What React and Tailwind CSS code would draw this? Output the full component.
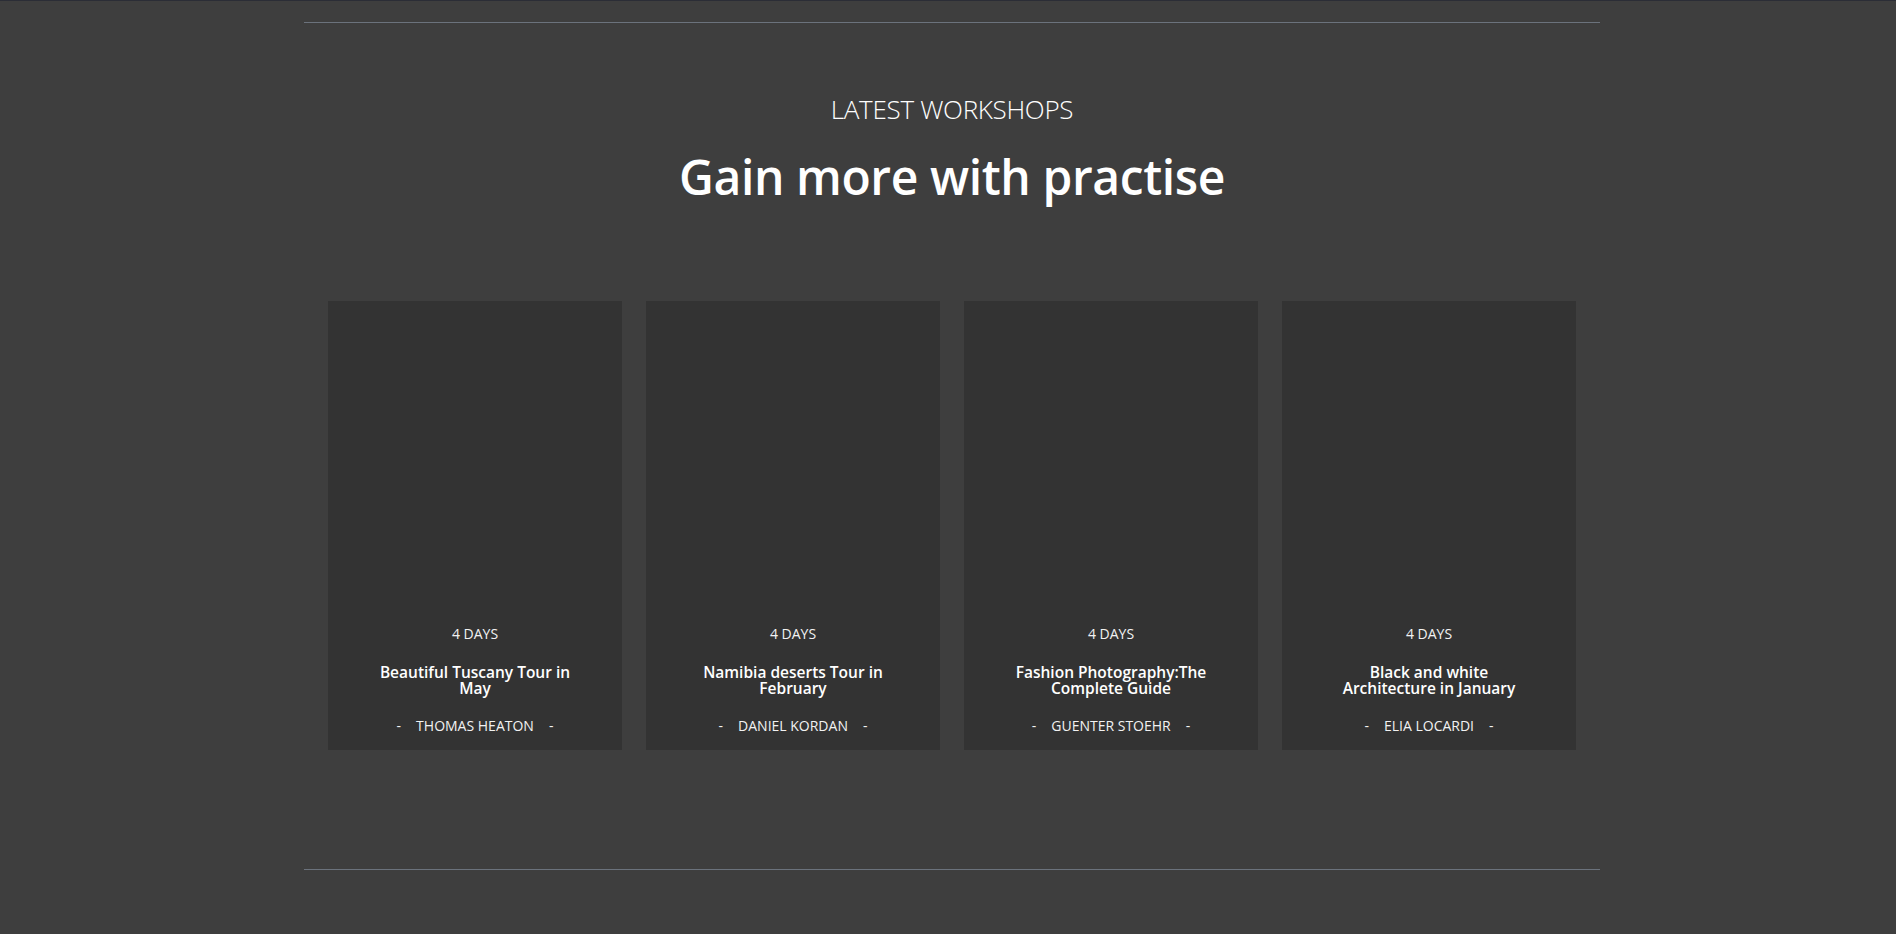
const workshops = [
  { days: '4 DAYS', title: 'Beautiful Tuscany Tour in May', author: 'THOMAS HEATON' },
  { days: '4 DAYS', title: 'Namibia deserts Tour in February', author: 'DANIEL KORDAN' },
  { days: '4 DAYS', title: 'Fashion Photography:The Complete Guide', author: 'GUENTER STOEHR' },
  { days: '4 DAYS', title: 'Black and white Architecture in January', author: 'ELIA LOCARDI' },
];

const WorkshopCard = ({ days, title, author }) => (
  <div className="h-[449px] bg-[#333333] flex flex-col justify-end items-center pb-[16px] text-center">
    <p className="text-[14px] leading-[16px] text-[#f2f2f2] mb-[22px]">{days}</p>
    <h3 className="w-[215px] text-[15.5px] leading-[16px] font-semibold text-white mb-[22px]">
      {title}
    </h3>
    <div className="flex items-center gap-[15px] text-[14px] leading-[16px] text-[#f2f2f2]">
      <span>-</span>
      <span>{author}</span>
      <span>-</span>
    </div>
  </div>
);

const App = () => {
  return (
    <div
      className="min-h-screen bg-[#3e3e3e] border-t border-[#2b2d36]"
      style={{ fontFamily: '"Open Sans", "Noto Sans", sans-serif' }}
    >
      <section className="ml-[304px] w-[1296px] mt-[21px] border-t border-b border-[#6b727c] pb-[119px]">
        {/* Heading */}
        <div className="pt-[70px] text-center">
          <p className="text-[26px] leading-[32px] font-light text-white tracking-[-0.3px]">
            LATEST WORKSHOPS
          </p>
          <h2 className="mt-[20px] text-[48px] leading-[64px] font-semibold text-white tracking-[-0.4px]">
            Gain more with practise
          </h2>
        </div>

        {/* Cards */}
        <div className="mt-[92px] px-[24px] grid grid-cols-4 gap-[24px]">
          {workshops.map((w) => (
            <WorkshopCard key={w.title} {...w} />
          ))}
        </div>
      </section>
    </div>
  );
};

export default App;
